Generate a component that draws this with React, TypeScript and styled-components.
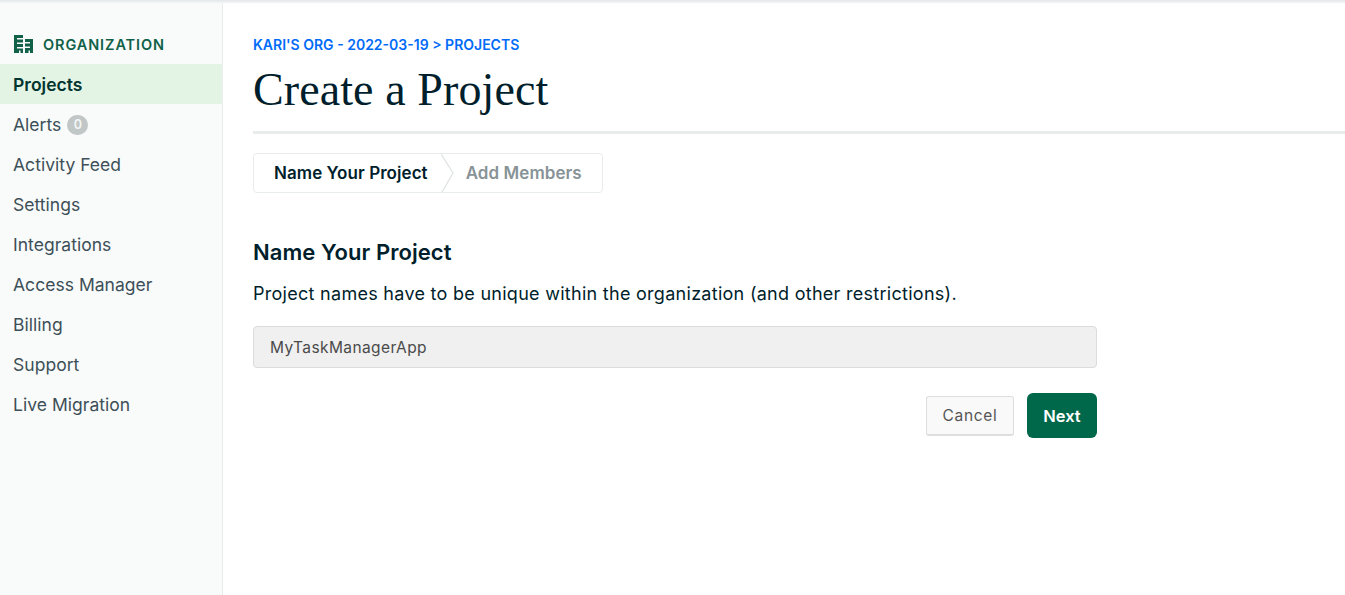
import React from "react";
import styled, { createGlobalStyle } from "styled-components";

const Global = createGlobalStyle`
  html, body { margin: 0; padding: 0; height: 100%; background: #fff; }
  body { font-family: "Inter", "Liberation Sans", sans-serif; color: #001e2b; overflow: hidden; }
`;

const Page = styled.div`
  position: relative;
  display: flex;
  width: 1345px;
  height: 595px;
  overflow: hidden;
`;

const TopShade = styled.div`
  position: absolute;
  left: 0;
  right: 0;
  top: 0;
  height: 4px;
  background: linear-gradient(#e4e7e8, #f1f4f4 60%, rgba(255, 255, 255, 0));
`;

const Sidebar = styled.nav`
  width: 222px;
  flex: none;
  box-sizing: content-box;
  background: #f9fbfa;
  border-right: 1px solid #e8edeb;
  padding-top: 34px;
`;

const OrgHeader = styled.div`
  display: flex;
  align-items: center;
  gap: 10px;
  height: 20px;
  padding-left: 14px;
  margin-bottom: 10px;
  color: #116149;
  font-size: 14.5px;
  font-weight: 600;
  letter-spacing: 0.9px;
`;

const NavItem = styled.div<{ $active?: boolean }>`
  display: flex;
  align-items: center;
  height: 40px;
  padding-left: 13px;
  font-size: 17.5px;
  letter-spacing: 0.03px;
  font-weight: ${(p) => (p.$active ? 600 : 400)};
  color: ${(p) => (p.$active ? "#023430" : "#3d4f58")};
  background: ${(p) => (p.$active ? "#e3f4e4" : "transparent")};
`;

const Badge = styled.span`
  display: inline-flex;
  align-items: center;
  justify-content: center;
  width: 21px;
  height: 20px;
  margin: 1px 0 0 6px;
  border-radius: 10px;
  background: #c1c7c6;
  color: #f4f6f6;
  font-size: 12.5px;
  font-weight: 600;
`;

const Main = styled.main`
  flex: 1;
  min-width: 0;
  padding: 36px 0 0 30px;
`;

const Crumbs = styled.div`
  color: #016bf8;
  font-size: 14px;
  line-height: 18px;
  font-weight: 600;
`;

const Title = styled.h1`
  margin: 8px 0 0;
  font-family: "Liberation Serif", serif;
  font-weight: 400;
  font-size: 46px;
  line-height: 56px;
  letter-spacing: 0.1px;
  color: #001e2b;
  padding-bottom: 13px;
  border-bottom: 3px solid #e8edeb;
`;

const Steps = styled.div`
  display: inline-flex;
  align-items: center;
  height: 38px;
  margin-top: 19px;
  background: #fff;
  border: 1px solid #e8edeb;
  border-radius: 4px;
`;

const Step = styled.div<{ $current?: boolean }>`
  font-size: 17px;
  font-weight: 600;
  letter-spacing: 0.06px;
  color: ${(p) => (p.$current ? "#001e2b" : "#889397")};
  padding: ${(p) => (p.$current ? "0 13px 0 20px" : "0 20px 0 12px")};
`;

const StepChevron = styled.svg`
  width: 13px;
  height: 38px;
  flex: none;
`;

const Section = styled.section`
  width: 844px;
`;

const Heading = styled.h2`
  margin: 45px 0 0;
  font-size: 22px;
  line-height: 28px;
  font-weight: 600;
  letter-spacing: 0.06px;
  color: #001e2b;
`;

const Help = styled.p`
  margin: 16px 0 0;
  font-size: 18px;
  line-height: 24px;
  letter-spacing: 0.28px;
  color: #001e2b;
`;

const NameField = styled.div`
  box-sizing: border-box;
  display: flex;
  align-items: center;
  height: 42px;
  margin-top: 20px;
  padding-left: 16px;
  background: #f0f0f0;
  border: 1px solid #dcdcdc;
  border-radius: 4px;
  color: #4a4a4a;
  font-size: 15.5px;
  letter-spacing: 0.4px;
`;

const Actions = styled.div`
  display: flex;
  justify-content: flex-end;
  align-items: center;
  gap: 13px;
  margin-top: 25px;
`;

const CancelButton = styled.button`
  box-sizing: border-box;
  width: 88px;
  height: 40px;
  background: #f9f9f9;
  border: 1px solid #dedede;
  border-bottom-width: 2px;
  border-radius: 3px;
  color: #555;
  font-family: inherit;
  font-size: 15.5px;
  letter-spacing: 0.7px;
`;

const NextButton = styled.button`
  width: 70px;
  height: 45px;
  background: #00684a;
  border: none;
  border-radius: 6px;
  color: #fff;
  font-family: inherit;
  font-size: 16.5px;
  font-weight: 600;
`;

const OrgIcon = () => (
  <svg width="19" height="18" viewBox="0 0 19 18" fill="#116149">
    <path d="M0 0h9v3H3v1.500h6v3H3V9h6v3H3v1.500h6V18H6.500v-2.500H5V18H0z" />
    <path d="M11 4h8v14h-3v-2.500h-1.500V18H11v-5h5v-1.500h-5v-3h5V7h-5z" />
  </svg>
);

const items = ["Alerts", "Activity Feed", "Settings", "Integrations", "Access Manager", "Billing", "Support", "Live Migration"];

export default function App() {
  return (
    <Page>
      <Global />
      <Sidebar>
        <OrgHeader>
          <OrgIcon />
          ORGANIZATION
        </OrgHeader>
        <NavItem $active>Projects</NavItem>
        {items.map((item) => (
          <NavItem key={item}>
            {item}
            {item === "Alerts" && <Badge>0</Badge>}
          </NavItem>
        ))}
      </Sidebar>
      <Main>
        <Crumbs>KARI'S ORG - 2022-03-19 &gt; PROJECTS</Crumbs>
        <Title>Create a Project</Title>
        <Steps>
          <Step $current>Name Your Project</Step>
          <StepChevron viewBox="0 0 13 38" fill="none" stroke="#e0e4e3" strokeWidth="1.3">
            <path d="M0 0l12 19L1 38" />
          </StepChevron>
          <Step>Add Members</Step>
        </Steps>
        <Section>
          <Heading>Name Your Project</Heading>
          <Help>Project names have to be unique within the organization (and other restrictions).</Help>
          <NameField>MyTaskManagerApp</NameField>
          <Actions>
            <CancelButton>Cancel</CancelButton>
            <NextButton>Next</NextButton>
          </Actions>
        </Section>
      </Main>
      <TopShade />
    </Page>
  );
}
